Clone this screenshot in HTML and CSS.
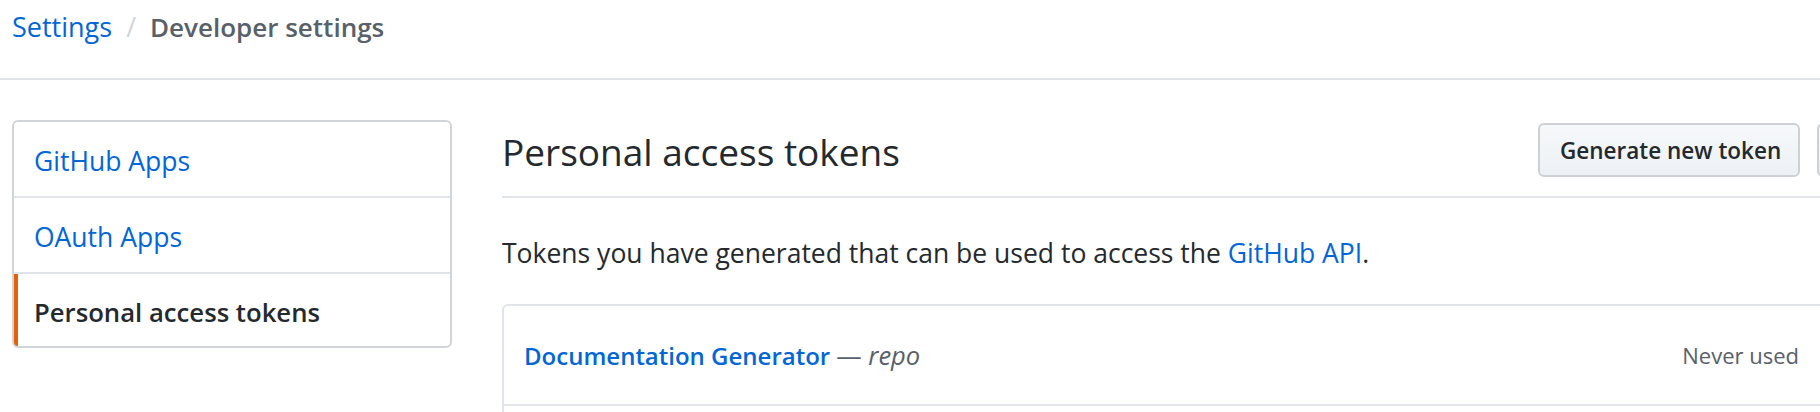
FILE: index.html
```html
<!DOCTYPE html>
<html lang="en">
<head>
<meta charset="utf-8">
<title>Personal access tokens</title>
<link rel="stylesheet" href="styles.css">
</head>
<body>
<header class="crumbs">
  <a class="crumb-link" href="#">Settings</a>
  <span class="crumb-sep">/</span>
  <span class="crumb-current">Developer settings</span>
</header>
<div class="layout">
  <nav class="menu">
    <a class="menu-item" href="#">GitHub Apps</a>
    <a class="menu-item" href="#">OAuth Apps</a>
    <a class="menu-item selected" href="#">Personal access tokens</a>
  </nav>
  <main class="content">
    <div class="subhead">
      <h2 class="subhead-title">Personal access tokens</h2>
      <div class="actions">
        <button class="btn" type="button">Generate new token</button>
        <button class="btn btn-revoke" type="button">Revoke all</button>
      </div>
    </div>
    <p class="lead">Tokens you have generated that can be used to access the <a href="#">GitHub API</a>.</p>
    <div class="tokens">
      <div class="token-row">
        <div class="token-name"><a href="#">Documentation Generator</a> <span class="token-scope">— <em>repo</em></span></div>
        <div class="token-meta">
          <span class="token-used">Never used</span>
          <button class="btn btn-delete" type="button">Delete</button>
        </div>
      </div>
      <div class="token-row token-row-next"></div>
    </div>
  </main>
</div>
</body>
</html>
```

FILE: styles.css
```css
html, body {
  margin: 0;
  padding: 0;
  background: #ffffff;
  overflow: hidden;
}

body {
  font-family: "Open Sans", "Noto Sans", sans-serif;
  color: #24292e;
}

a {
  color: #0366d6;
  text-decoration: none;
}

.crumbs {
  height: 80px;
  box-sizing: border-box;
  padding: 7px 0 0 12px;
  border-bottom: 2px solid #e1e4e8;
  font-size: 27px;
  line-height: 40px;
  display: flex;
  align-items: flex-start;
  white-space: nowrap;
}

.crumb-sep {
  color: #d1d5da;
  margin: 0 14px 0 14px;
}

.crumb-current {
  color: #586069;
  font-weight: 600;
  font-size: 26px;
}

.layout {
  display: flex;
  gap: 50px;
  padding: 40px 0 0 12px;
  width: 2040px;
}

.menu {
  flex: 0 0 440px;
  box-sizing: border-box;
  height: 228px;
  border: 2px solid #d1d5da;
  border-radius: 6px;
  display: flex;
  flex-direction: column;
  overflow: hidden;
}

.menu-item {
  position: relative;
  height: 74px;
  line-height: 78px;
  padding-left: 20px;
  font-size: 26.5px;
  border-bottom: 2px solid #e1e4e8;
  white-space: nowrap;
}

.menu-item:last-child {
  border-bottom: 0;
  height: 73px;
}

.menu-item.selected {
  color: #24292e;
  font-weight: 600;
  font-size: 25.7px;
}

.menu-item.selected::before {
  content: "";
  position: absolute;
  left: 0;
  top: 0;
  bottom: 0;
  width: 4px;
  background: #e36209;
}

.content {
  flex: 0 0 1515px;
}

.subhead {
  display: flex;
  align-items: flex-start;
  padding-top: 3px;
  padding-bottom: 19px;
  border-bottom: 2px solid #e1e4e8;
}

.subhead-title {
  flex: 1;
  margin: 0;
  padding-top: 4px;
  font-size: 37px;
  line-height: 50px;
  font-weight: 400;
  white-space: nowrap;
}

.actions {
  display: flex;
  gap: 17px;
}

.btn {
  font-family: inherit;
  height: 54px;
  box-sizing: border-box;
  padding: 0 20px;
  border: 2px solid #cdd1d5;
  border-radius: 6px;
  background: linear-gradient(180deg, #f6f8fa 0%, #edf1f5 100%);
  color: #24292e;
  font-size: 22.5px;
  font-weight: 600;
  white-space: nowrap;
}

.actions .btn:first-child {
  width: 262px;
}

.btn-revoke {
  width: 200px;
}

.lead {
  margin: 36px 0 0;
  font-size: 26.5px;
  line-height: 39px;
  white-space: nowrap;
}

.tokens {
  margin-top: 31px;
  border: 2px solid #e1e4e8;
  border-radius: 6px;
}

.token-row {
  height: 98px;
  padding: 0 20px;
  display: flex;
  align-items: center;
  justify-content: space-between;
  border-bottom: 2px solid #e1e4e8;
  font-size: 23px;
  white-space: nowrap;
}

.token-row-next {
  border-bottom: 0;
}

.token-name a {
  font-weight: 600;
  font-size: 24px;
}

.token-scope {
  color: #586069;
  font-size: 25.5px;
}

.token-meta {
  display: flex;
  align-items: center;
}

.token-used {
  color: #586069;
  font-size: 22px;
}

.btn-delete {
  margin-left: 26px;
  width: 170px;
  height: 44px;
  color: #cb2431;
}
```
